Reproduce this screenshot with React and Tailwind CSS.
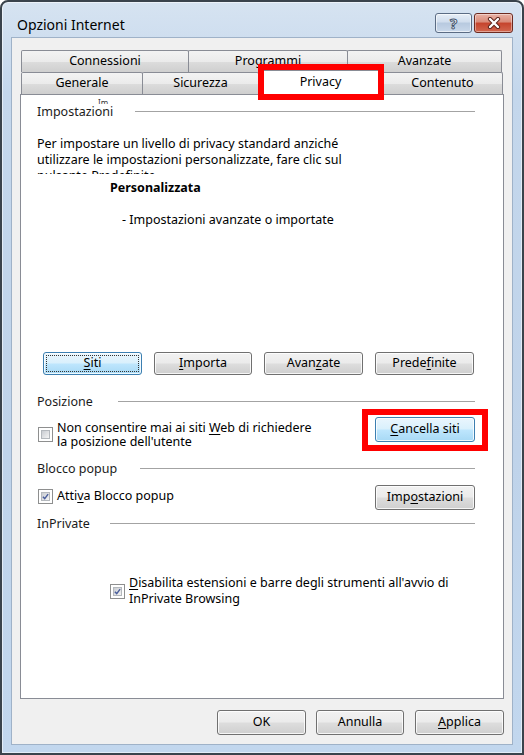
import React from 'react';

const FONT = { fontFamily: '"Noto Sans", "Open Sans", sans-serif' };

const btnBase =
  'h-[23px] rounded-[3px] border text-[12.5px] text-black flex items-center justify-center shadow-[inset_0_0_0_1px_rgba(255,255,255,0.8)]';
const btnGray =
  'border-[#707070] bg-[linear-gradient(180deg,#f2f2f2_0%,#ebebeb_48%,#dddddd_52%,#cfcfcf_100%)]';
const btnBlue =
  'border-[#3c7fb1] bg-[linear-gradient(180deg,#eaf6fd_0%,#d9f0fc_48%,#bee6fd_52%,#a7d9f5_100%)]';

const U = ({ children }) => <span className="underline underline-offset-[2px]">{children}</span>;

const Check = ({ checked }) => (
  <div className="w-[15px] h-[15px] border border-[#8e8f8f] bg-white p-[2px] shrink-0">
    <div className="relative w-full h-full border border-[#b4b8bd] bg-[linear-gradient(135deg,#c9ccd1_0%,#f4f4f4_100%)]">
      {checked && (
        <svg viewBox="0 0 8 8" className="absolute inset-0 w-full h-full">
          <path d="M1 4.2 L3.1 6.4 L7 1.2" fill="none" stroke="#4a5e9c" strokeWidth="1.6" />
        </svg>
      )}
    </div>
  </div>
);

const Header = ({ label, labelW }) => (
  <div className="flex items-center h-[16px] pr-[28px]">
    <div className={`${labelW} shrink-0 text-[12.5px] leading-[16px] text-[#1b1b1b]`}>{label}</div>
    <div className="flex-1 h-[2px] border-t border-[#a3a3a3] border-b border-b-white" />
  </div>
);

const Tab = ({ w, children }) => (
  <div
    className={`${w} -ml-px first:ml-0 h-[22px] border border-[#898c95] border-b-0 rounded-t-[2px] bg-[linear-gradient(180deg,#f3f3f3_0%,#ebebeb_50%,#dcdcdc_52%,#cfcfcf_100%)] flex items-center justify-center text-[12.5px] text-black`}
  >
    {children}
  </div>
);

export default function App() {
  return (
    <div className="w-[524px] h-[755px] bg-white" style={FONT}>
      <div className="w-[524px] h-[755px] rounded-t-[8px] border-2 border-[#3a434c] bg-[linear-gradient(180deg,#d6e3f1_0%,#c4d7ec_12%,#bfd3ea_60%,#c2d7ee_100%)] shadow-[inset_0_0_0_1px_rgba(255,255,255,0.55)] flex flex-col">
        {/* Title bar */}
        <div className="h-[35px] flex items-start justify-between pl-[15px] pr-[9px]">
          <div className="mt-[13px] text-[14px] leading-[20px] text-black">Opzioni Internet</div>
          <div className="flex mt-[11px]">
            <div className="w-[37px] h-[20px] rounded-[3px] border border-[#5b6c84] bg-[linear-gradient(180deg,#e6eef7_0%,#d0dded_45%,#b7c9df_50%,#c9d8ea_100%)] shadow-[inset_0_0_0_1px_rgba(255,255,255,0.6)] flex items-center justify-center">
              <span className="text-[15px] font-bold leading-none text-white [-webkit-text-stroke:1px_#46566e]">?</span>
            </div>
            <div className="w-[39px] h-[20px] ml-[2px] rounded-[3px] border border-[#6d2a20] bg-[linear-gradient(180deg,#e9b2a5_0%,#d98a78_45%,#c5432c_50%,#d2674f_100%)] shadow-[inset_0_0_0_1px_rgba(255,255,255,0.4)] flex items-center justify-center">
              <svg viewBox="0 0 14 12" className="w-[14px] h-[12px]">
                <path d="M3 2 L11 10 M11 2 L3 10" stroke="#5a2017" strokeWidth="4.2" strokeLinecap="round" />
                <path d="M3 2 L11 10 M11 2 L3 10" stroke="#ffffff" strokeWidth="2.4" strokeLinecap="round" />
              </svg>
            </div>
          </div>
        </div>

        {/* Client area */}
        <div className="mx-[9px] mb-[8px] flex-1 bg-[#f0f0f0] border border-[#9fb2c8] flex flex-col pt-[12px] px-[8px]">
          {/* Tabs */}
          <div className="ml-px">
            <div className="flex">
              <Tab w="w-[168px]">Connessioni</Tab>
              <Tab w="w-[160px]">Programmi</Tab>
              <Tab w="w-[155px]">Avanzate</Tab>
            </div>
            <div className="flex">
              <Tab w="w-[122px]">Generale</Tab>
              <Tab w="w-[117px]">Sicurezza</Tab>
              <div className="relative z-10 -ml-px w-[125px] h-[24px] -mt-[2px] -mb-px border border-[#898c95] border-b-0 bg-white flex items-center justify-center text-[12.5px] text-black">
                Privacy
                <div className="absolute -left-[1px] -top-[7px] w-[126px] h-[36px] border-[6px] border-[#ff0000]" />
              </div>
              <Tab w="w-[121px]">Contenuto</Tab>
            </div>
          </div>

          {/* Panel */}
          <div className="h-[605px] bg-white border border-[#898c95] pl-[16px] flex flex-col text-[12.5px] text-black">
            <div className="h-[9px] overflow-hidden pl-[61px] pt-[4px]">
              <div className="text-[8px] leading-[8px] text-[#333]">Im</div>
            </div>
            <Header label="Impostazioni" labelW="w-[98px]" />

            <div className="mt-[16px] h-[38px] overflow-hidden leading-[16px]">
              Per impostare un livello di privacy standard anziché
              <br />
              utilizzare le impostazioni personalizzate, fare clic sul
              <br />
              pulsante Predefinite.
            </div>
            <div className="mt-[6px] ml-[73px] leading-[16px] font-bold">Personalizzata</div>
            <div className="mt-[16px] ml-[85px] leading-[16px]">- Impostazioni avanzate o importate</div>

            <div className="mt-[124px] ml-[6px] flex gap-[12px]">
              <div className={`${btnBase} ${btnBlue} w-[99px] p-[2px]`}>
                <div className="w-full h-full border border-dotted border-[#333] flex items-center justify-center">
                  <U>S</U>iti
                </div>
              </div>
              <div className={`${btnBase} ${btnGray} w-[98px]`}>
                <U>I</U>mporta
              </div>
              <div className={`${btnBase} ${btnGray} w-[99px]`}>
                Avan<U>z</U>ate
              </div>
              <div className={`${btnBase} ${btnGray} w-[99px]`}>
                Prede<U>f</U>inite
              </div>
            </div>

            <div className="mt-[19px]">
              <Header label="Posizione" labelW="w-[81px]" />
            </div>
            <div className="mt-[7px] flex items-start justify-between pr-[28px]">
              <div className="flex items-start pt-[4px]">
                <div className="mt-[6px] ml-px">
                  <Check />
                </div>
                <div className="ml-[4px] leading-[14px]">
                  Non consentire mai ai siti <U>W</U>eb di richiedere
                  <br />
                  la posizione dell'utente
                </div>
              </div>
              <div className={`${btnBase} ${btnBlue} relative w-[100px] h-[25px] mt-0`}>
                <U>C</U>ancella siti
                <div className="absolute -left-[14px] -top-[9px] w-[126px] h-[42px] border-[6px] border-[#ff0000]" />
              </div>
            </div>

            <div className="mt-[12px]">
              <Header label="Blocco popup" labelW="w-[103px]" />
            </div>
            <div className="mt-[8px] flex items-start justify-between pr-[28px]">
              <div className="flex items-start pt-[4px]">
                <div className="ml-px">
                  <Check checked />
                </div>
                <div className="ml-[4px] leading-[14px]">
                  Atti<U>v</U>a Blocco popup
                </div>
              </div>
              <div className={`${btnBase} ${btnGray} w-[100px] h-[25px]`}>
                Imp<U>o</U>stazioni
              </div>
            </div>

            <div className="mt-[6px]">
              <Header label="InPrivate" labelW="w-[73px]" />
            </div>
            <div className="mt-[43px] ml-[73px] flex items-start">
              <div className="mt-[9px]">
                <Check checked />
              </div>
              <div className="ml-[4px] leading-[16px]">
                <U>D</U>isabilita estensioni e barre degli strumenti all'avvio di
                <br />
                InPrivate Browsing
              </div>
            </div>
          </div>

          {/* Bottom buttons */}
          <div className="mt-[11px] flex justify-end">
            <div className={`${btnBase} ${btnGray} w-[89px] h-[25px]`}>OK</div>
            <div className={`${btnBase} ${btnGray} w-[88px] h-[25px] ml-[10px]`}>Annulla</div>
            <div className={`${btnBase} ${btnGray} w-[89px] h-[25px] ml-[11px]`}>
              <U>A</U>pplica
            </div>
          </div>
        </div>
      </div>
    </div>
  );
}
